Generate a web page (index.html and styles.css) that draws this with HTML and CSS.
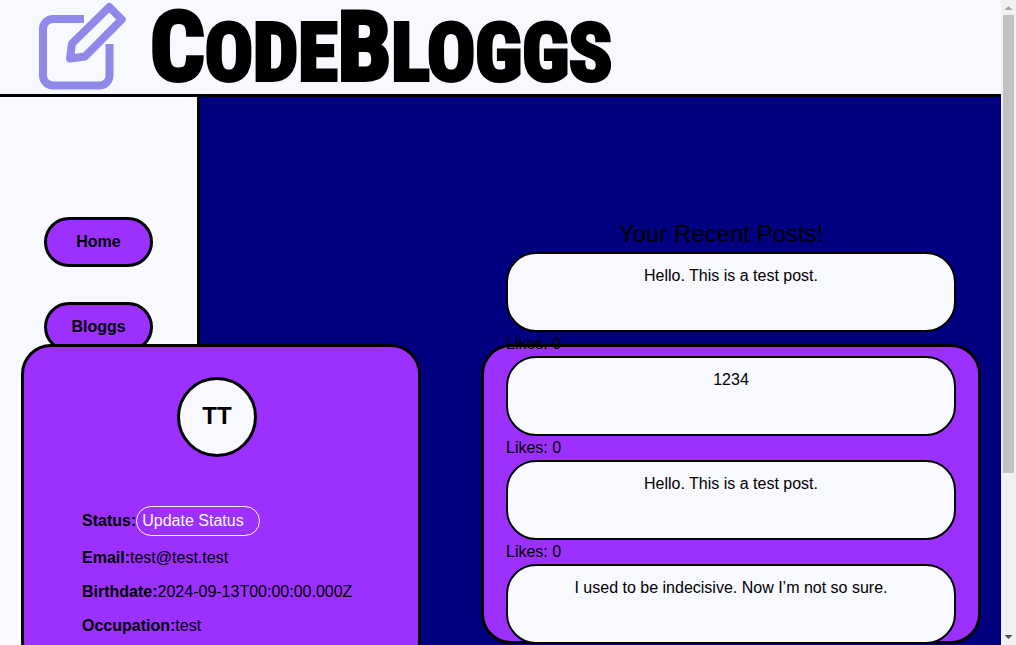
FILE: index.html
```html
<!DOCTYPE html>
<html lang="en">
<head>
<meta charset="utf-8">
<title>CodeBloggs</title>
<link rel="stylesheet" href="styles.css">
</head>
<body>
<div class="page">
  <header class="header">
    <svg class="logo-icon" viewBox="36 0 94 94" aria-hidden="true">
      <path d="M84 19H53a10 10 0 0 0-10 10V75.500a10 10 0 0 0 10 10H99.500a10 10 0 0 0 10-10V44"/>
      <path d="M109.300 7L121.700 19.500L85 56.500L70 58.500L72 43.500Z"/>
    </svg>
    <h1 class="wordmark"><span class="cap">C</span>ODE<span class="cap">B</span>LOGGS</h1>
  </header>
  <div class="stage">
    <nav class="sidebar">
      <button class="nav-button" type="button">Home</button>
      <button class="nav-button" type="button">Bloggs</button>
    </nav>
    <main class="content">
      <section class="profile">
        <div class="avatar">TT</div>
        <div class="field status"><label for="status">Status:</label><input id="status" type="text" placeholder="Update Status"></div>
        <div class="field"><b>Email:</b>test@test.test</div>
        <div class="field"><b>Birthdate:</b>2024-09-13T00:00:00.000Z</div>
        <div class="field"><b>Occupation:</b>test</div>
      </section>
      <section class="recent">
        <div class="recent-panel"></div>
        <div class="recent-list">
          <h2 class="recent-title">Your Recent Posts!</h2>
          <article class="post">Hello. This is a test post.</article>
          <p class="likes">Likes: 0</p>
          <article class="post">1234</article>
          <p class="likes">Likes: 0</p>
          <article class="post">Hello. This is a test post.</article>
          <p class="likes">Likes: 0</p>
          <article class="post">I used to be indecisive. Now I’m not so sure.</article>
        </div>
      </section>
    </main>
  </div>
</div>
<div class="scrollbar" aria-hidden="true">
  <svg class="arrow arrow-up" viewBox="0 0 15 15"><path d="M3.500 10L7.500 6L11.500 10Z"/></svg>
  <div class="track"><div class="thumb"></div></div>
  <svg class="arrow" viewBox="0 0 15 15"><path d="M3.500 5L7.500 9L11.500 5Z"/></svg>
</div>
</body>
</html>
```
FILE: styles.css
```css
* {
  box-sizing: border-box;
}

body {
  margin: 0;
  height: 100vh;
  display: grid;
  grid-template-columns: minmax(0, 1fr) 15px;
  overflow: hidden;
  background: #000080;
  color: #000;
  font: 16px/24px "Liberation Sans", Arial, sans-serif;
}

.page {
  height: 100vh;
  display: flex;
  flex-direction: column;
  overflow: hidden;
}

.header {
  flex: none;
  display: flex;
  align-items: center;
  gap: 20px;
  padding-left: 36px;
  background: #f8f8ff;
  border-bottom: 3px solid #000;
}

.logo-icon {
  width: 94px;
  height: 94px;
  fill: none;
  stroke: #9089ea;
  stroke-width: 8px;
  stroke-linejoin: round;
}

.wordmark {
  margin: 0;
  padding-top: 6px;
  font: bold 80px/80px "Liberation Sans Narrow", "Roboto Condensed", "DejaVu Sans Condensed", sans-serif;
  -webkit-text-stroke: 4px #000;
  white-space: nowrap;
}

.cap {
  font-size: 96px;
}

.stage {
  flex: 1;
  min-height: 0;
  display: grid;
  grid-template-columns: 200px minmax(0, 1fr);
}

.sidebar {
  grid-area: 1 / 1;
  display: flex;
  flex-direction: column;
  align-items: center;
  gap: 35px;
  padding-top: 120px;
  background: #f8f8ff;
  border-right: 3px solid #000;
}

.nav-button {
  width: 109px;
  height: 50px;
  padding: 0;
  border: 3px solid #000;
  border-radius: 25px;
  background: #9b30ff;
  color: #000;
  font: bold 16px/24px "Liberation Sans", Arial, sans-serif;
}

.content {
  grid-area: 1 / 1 / 2 / 3;
  display: flex;
  justify-content: space-between;
  align-items: flex-start;
  padding: 0 20px 0 21px;
}

.profile {
  width: 400px;
  display: flex;
  flex-direction: column;
  gap: 10px;
  margin-top: 247px;
  padding: 30px 58px;
  border: 3px solid #000;
  border-radius: 30px;
  background: #9b30ff;
}

.avatar {
  align-self: center;
  width: 80px;
  height: 80px;
  margin: 0 8px 39px 0;
  border: 3px solid #000;
  border-radius: 50%;
  background: #f8f8ff;
  font-size: 24px;
  font-weight: bold;
  line-height: 72px;
  text-align: center;
}

.status {
  display: flex;
  align-items: center;
}

.status label {
  font-weight: bold;
}

.status input {
  width: 124px;
  height: 30px;
  padding: 0 5px;
  border: 1px solid #f8f8ff;
  border-radius: 15px;
  background: transparent;
  color: #f8f8ff;
  font: inherit;
}

.status input::placeholder {
  color: #f8f8ff;
}

.recent {
  width: 500px;
  display: grid;
}

.recent-panel {
  grid-area: 1 / 1;
  height: 300px;
  margin-top: 247px;
  border: 3px solid #000;
  border-radius: 30px;
  background: #9b30ff;
}

.recent-list {
  grid-area: 1 / 1;
  padding: 119px 25px 0;
}

.recent-title {
  margin: 0;
  padding-right: 20px;
  font-size: 24px;
  font-weight: normal;
  line-height: 36px;
  text-align: center;
}

.post {
  height: 80px;
  padding: 10px;
  border: 2px solid #000;
  border-radius: 30px;
  background: #f8f8ff;
  text-align: center;
}

.likes {
  margin: 0;
}

.scrollbar {
  display: flex;
  flex-direction: column;
  background: #f1f1f1;
}

.arrow {
  flex: none;
  width: 15px;
  height: 15px;
  fill: #505050;
}

.arrow-up {
  fill: #a3a3a3;
}

.track {
  flex: 1;
  padding: 0 2px;
}

.thumb {
  height: 74.5%;
  background: #c1c1c1;
}
```
